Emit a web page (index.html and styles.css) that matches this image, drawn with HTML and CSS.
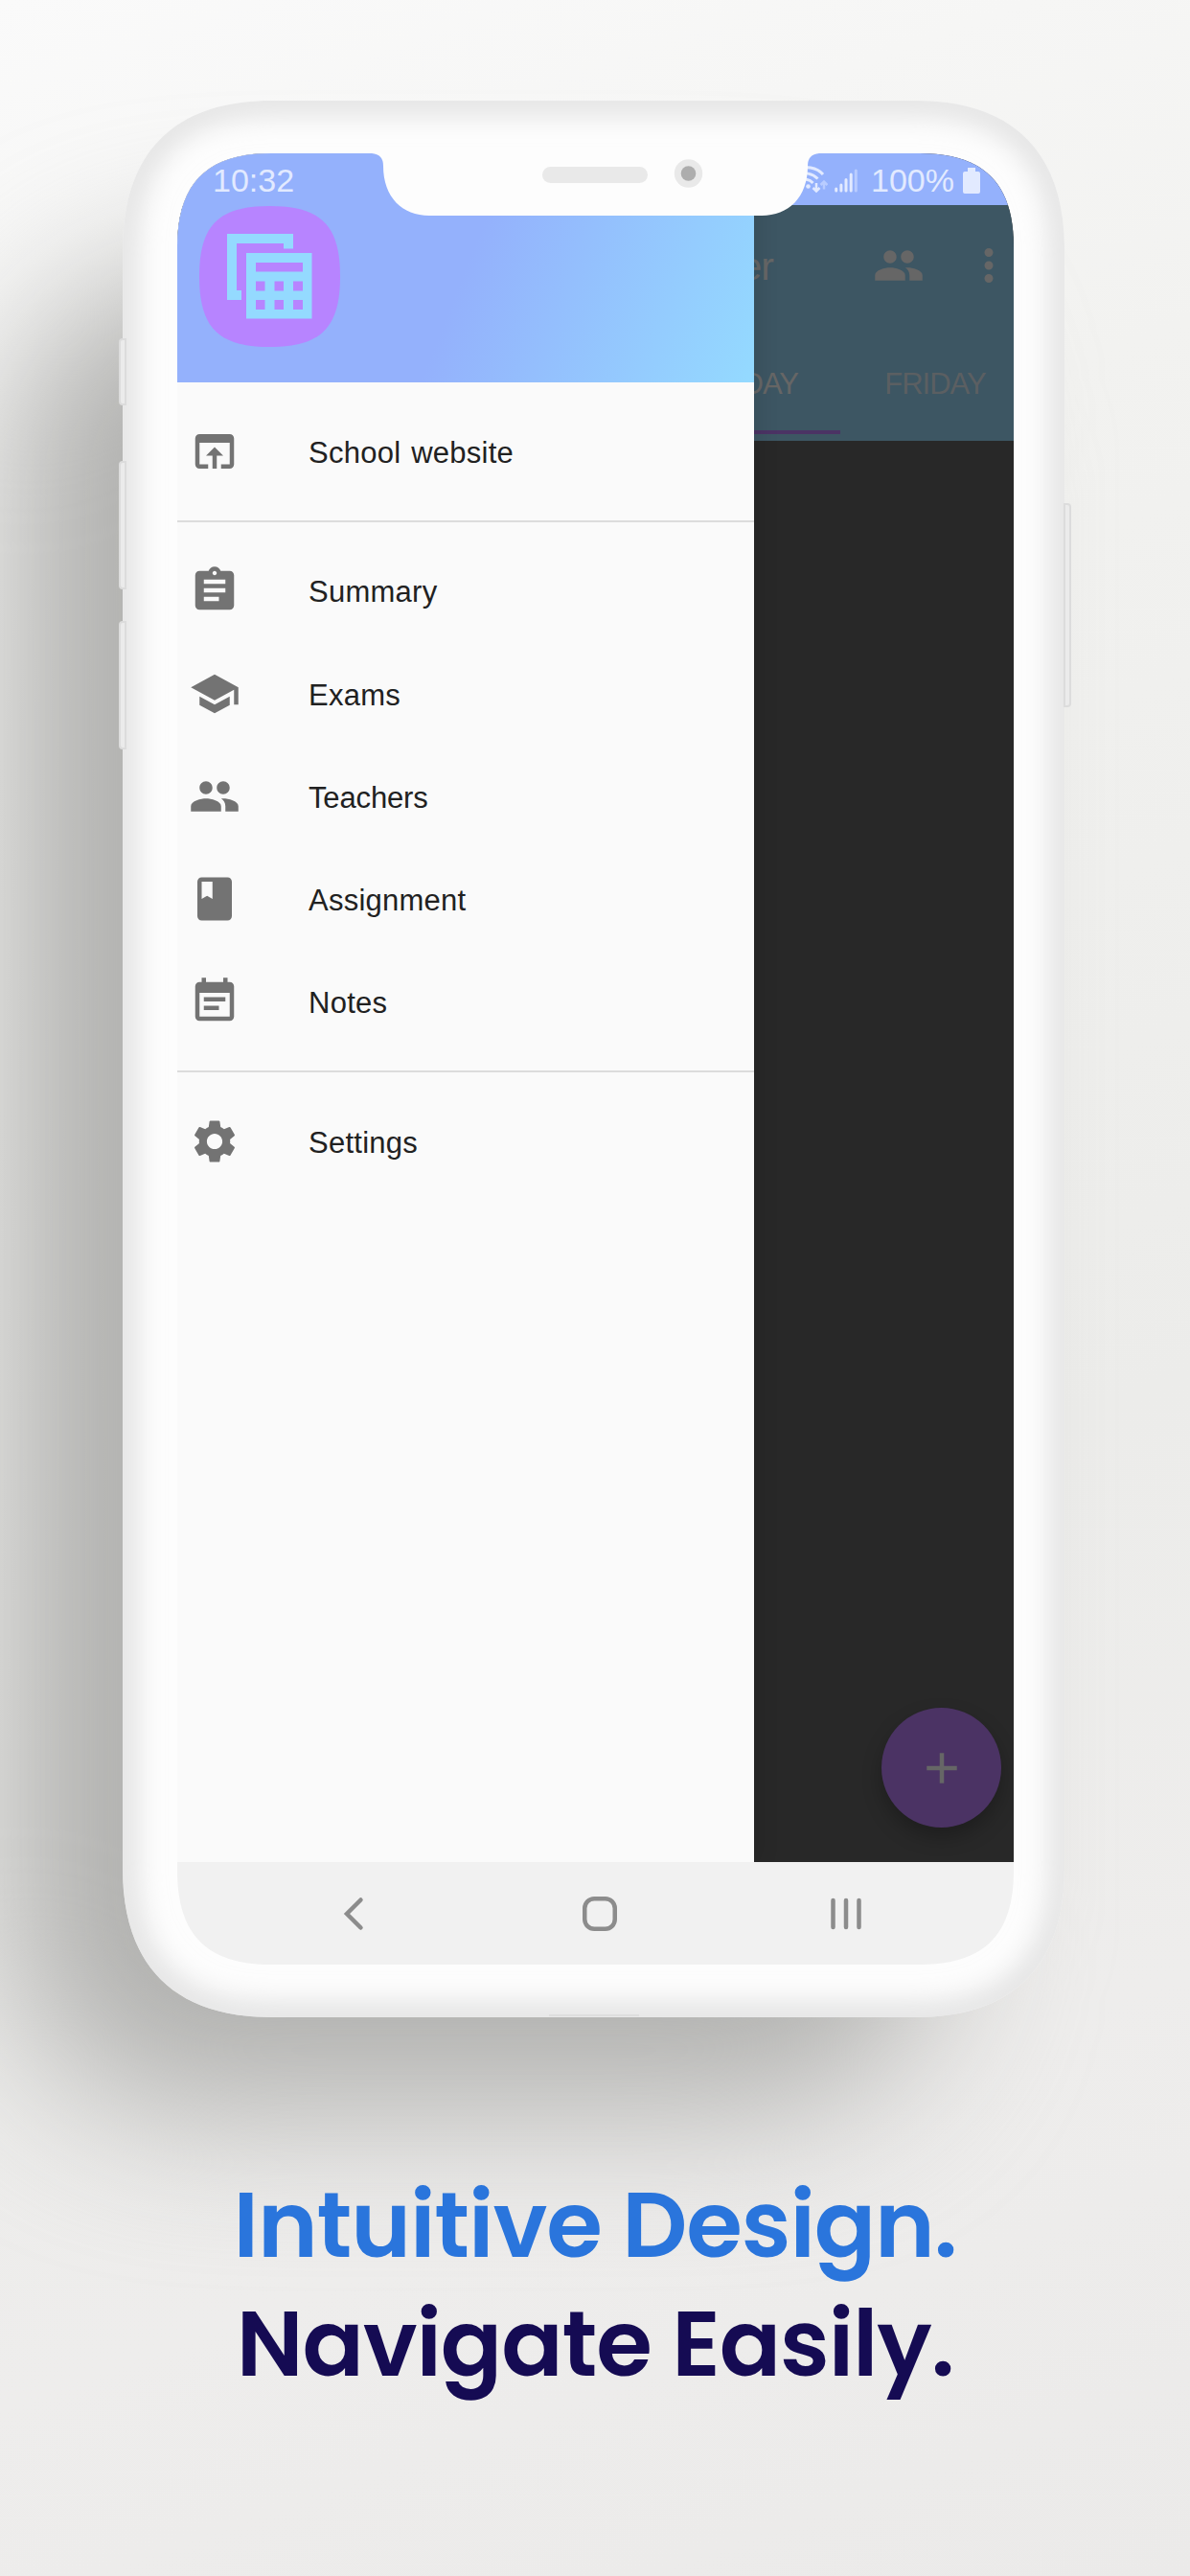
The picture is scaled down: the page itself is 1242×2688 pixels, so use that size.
FILE: index.html
```html
<!DOCTYPE html>
<html lang="en">
<head>
<meta charset="utf-8">
<title>Intuitive Design. Navigate Easily.</title>
<link rel="stylesheet" href="styles.css">
</head>
<body>
<main class="page">
  <div class="device">
    <span class="shadow"></span>
    <svg class="shell" viewBox="0 0 983 2000">
      <defs>
        <path id="body" d="M155 0H828C929 0 983 54 983 155V1845C983 1946 929 2000 828 2000H155C54 2000 0 1946 0 1845V155C0 54 54 0 155 0Z"/>
        <clipPath id="bodyClip"><use href="#body"/></clipPath>
        <filter id="soft" x="-10%" y="-10%" width="120%" height="120%"><feGaussianBlur stdDeviation="15"/></filter>
      </defs>
      <use href="#body" fill="#fdfdfd"/>
      <g clip-path="url(#bodyClip)"><use href="#body" fill="none" stroke="#dadada" stroke-width="24" filter="url(#soft)"/></g>
      <path d="M445 1998H539" stroke="#dedede" stroke-width="2"/>
    </svg>
    <span class="key key-mute"></span>
    <span class="key key-up"></span>
    <span class="key key-down"></span>
    <span class="key key-power"></span>
    <div class="screen">
      <div class="view">
        <div class="app">
          <header class="appbar">
            <div class="toolbar">
              <span class="app-title">er</span>
              <svg class="people" viewBox="0 0 24 24"><path d="M16 11c1.66 0 2.99-1.34 2.99-3S17.66 5 16 5s-3 1.34-3 3 1.34 3 3 3zm-8 0c1.66 0 2.99-1.34 2.99-3S9.66 5 8 5 5 6.34 5 8s1.34 3 3 3zm0 2c-2.33 0-7 1.17-7 3.5V19h14v-2.5c0-2.33-4.67-3.5-7-3.5zm8 0c-.29 0-.62.02-.97.05 1.16.84 1.97 1.97 1.97 3.45V19h6v-2.5c0-2.33-4.67-3.5-7-3.5z"/></svg>
              <svg class="more" viewBox="0 0 24 24"><path d="M12 8a2 2 0 1 0 0-4 2 2 0 0 0 0 4zm0 2a2 2 0 1 0 0 4 2 2 0 0 0 0-4zm0 6a2 2 0 1 0 0 4 2 2 0 0 0 0-4z"/></svg>
            </div>
            <nav class="tabs"><span class="tab tab-active">THURSDAY</span><span class="tab">FRIDAY</span></nav>
          </header>
          <button class="fab" aria-label="Add"><svg viewBox="0 0 24 24"><path d="M19 13h-6v6h-2v-6H5v-2h6V5h2v6h6z"/></svg></button>
        </div>
        <aside class="drawer">
          <div class="drawer-head">
            <svg class="logo" viewBox="0 0 147 147">
              <path fill="#b784ff" d="M73.500 0C127 0 147 20 147 73.500S127 147 73.500 147 0 127 0 73.500 20 0 73.500 0Z"/>
              <path fill="#94daff" d="M29 29H98V44.500H88V39H39V88H44V98H29Z"/>
              <path fill="#94daff" fill-rule="evenodd" d="M49 49H117.500V117.500H49ZM59 59V68.500H108V59ZM59 78.500V88.500H68.500V78.500ZM78.500 78.500V88.500H88V78.500ZM98 78.500V88.500H108V78.500ZM59 98V108H68.500V98ZM78.500 98V108H88V98ZM98 98V108H108V98Z"/>
            </svg>
          </div>
          <ul class="menu">
            <li><svg viewBox="0 0 24 24"><path d="M19 4H5c-1.110 0-2 .9-2 2v12c0 1.100.89 2 2 2h4v-2H5V8h14v10h-4v2h4c1.100 0 2-.9 2-2V6c0-1.100-.89-2-2-2zm-7 6l-4 4h3v6h2v-6h3l-4-4z"/></svg><span>School website</span></li>
          </ul>
          <ul class="menu">
            <li><svg viewBox="0 0 24 24"><path d="M19 3h-4.180C14.400 1.840 13.300 1 12 1c-1.300 0-2.400.84-2.820 2H5c-1.100 0-2 .9-2 2v14c0 1.100.9 2 2 2h14c1.100 0 2-.9 2-2V5c0-1.100-.9-2-2-2zm-7 0c.55 0 1 .45 1 1s-.45 1-1 1-1-.45-1-1 .45-1 1-1zm2 14H7v-2h7v2zm3-4H7v-2h10v2zm0-4H7V7h10v2z"/></svg><span>Summary</span></li>
            <li><svg viewBox="0 0 24 24"><path d="M5 13.180v4L12 21l7-3.820v-4L12 17l-7-3.820zM12 3L1 9l11 6 9-4.910V17h2V9L12 3z"/></svg><span>Exams</span></li>
            <li><svg viewBox="0 0 24 24"><path d="M16 11c1.660 0 2.990-1.340 2.990-3S17.660 5 16 5s-3 1.340-3 3 1.340 3 3 3zm-8 0c1.660 0 2.990-1.340 2.990-3S9.660 5 8 5 5 6.340 5 8s1.340 3 3 3zm0 2c-2.330 0-7 1.170-7 3.500V19h14v-2.500c0-2.330-4.670-3.500-7-3.500zm8 0c-.29 0-.62.02-.97.05 1.160.84 1.970 1.970 1.970 3.450V19h6v-2.500c0-2.330-4.670-3.500-7-3.500z"/></svg><span class="tight">Teachers</span></li>
            <li><svg viewBox="0 0 24 24"><path d="M18 2H6c-1.100 0-2 .9-2 2v16c0 1.100.9 2 2 2h12c1.100 0 2-.9 2-2V4c0-1.100-.9-2-2-2zM6 4h5v8l-2.500-1.500L6 12V4z"/></svg><span>Assignment</span></li>
            <li><svg viewBox="0 0 24 24"><path d="M17 10H7v2h10v-2zm2-7h-1V1h-2v2H8V1H6v2H5c-1.110 0-2 .9-2 2v14c0 1.100.89 2 2 2h14c1.100 0 2-.9 2-2V5c0-1.100-.9-2-2-2zm0 16H5V8h14v11zm-5-5H7v2h7v-2z"/></svg><span>Notes</span></li>
          </ul>
          <ul class="menu">
            <li><svg viewBox="0 0 24 24"><path d="M19.140 12.940c.04-.3.060-.61.060-.94 0-.32-.02-.64-.07-.94l2.030-1.580c.18-.14.23-.41.120-.61l-1.920-3.320c-.12-.22-.37-.29-.59-.22l-2.390.96c-.5-.38-1.030-.7-1.620-.94l-.36-2.540c-.04-.24-.24-.41-.48-.41h-3.840c-.24 0-.43.17-.47.41l-.36 2.540c-.59.24-1.130.57-1.620.94l-2.390-.96c-.22-.08-.47 0-.59.22L2.740 8.870c-.12.21-.08.47.12.61l2.030 1.580c-.05.3-.09.63-.09.94s.02.64.07.94l-2.030 1.580c-.18.14-.23.41-.12.61l1.920 3.320c.12.22.37.29.59.22l2.390-.96c.5.38 1.030.7 1.620.94l.36 2.540c.05.24.24.41.48.41h3.840c.24 0 .44-.17.47-.41l.36-2.540c.59-.24 1.130-.56 1.620-.94l2.390.96c.22.08.47 0 .59-.22l1.920-3.320c.12-.22.070-.47-.12-.61l-2.010-1.580zM12 15.600c-1.980 0-3.600-1.620-3.600-3.600s1.620-3.600 3.600-3.600 3.600 1.620 3.600 3.600-1.620 3.600-3.600 3.600z"/></svg><span>Settings</span></li>
          </ul>
        </aside>
        <div class="status">
          <span class="clock">10:32</span>
          <span class="status-icons">
            <svg class="wifi" viewBox="0 0 36 30">
              <g fill="none" stroke="#e2eaff" stroke-width="3"><path d="M2 4.500C12-1 25 2 31 9"/><path d="M4 9.500C11 6 20 8 25.500 13.500"/><path d="M6 15.500C11 13 17 14 20.500 18"/></g>
              <circle cx="15.500" cy="21.500" r="2.300" fill="#e2eaff"/>
              <path d="M24 18V26M20.500 23L24 26.500L27.500 23" fill="none" stroke="#e2eaff" stroke-width="2.500"/>
              <path d="M32 24.500V17M28.500 20L32 16.500L35.500 20" fill="none" stroke="#b9ccff" stroke-width="2.500"/>
            </svg>
            <svg class="signal" viewBox="0 0 24 26" stroke-width="3" stroke-linecap="round" stroke="#e2eaff"><path d="M1.700 22V24M6.900 18V24M12 12.500V24M17.200 7V24"/><path d="M22.300 3V24" stroke="#b9ccff"/></svg>
            <span class="percent">100%</span>
            <svg class="battery" viewBox="0 0 18 27"><path fill="#e2eaff" d="M5 0H13V4H16Q18 4 18 6V25Q18 27 16 27H2Q0 27 0 25V6Q0 4 2 4H5Z"/></svg>
          </span>
        </div>
      </div>
      <nav class="navbar">
        <svg viewBox="0 0 40 40"><path d="M27.500 5.500L13 20L27.500 34.500"/></svg>
        <svg viewBox="0 0 40 40"><rect x="4.250" y="4.250" width="31.500" height="31.500" rx="10"/></svg>
        <svg viewBox="0 0 40 40"><path d="M6.500 6V34M20 6V34M33.500 6V34"/></svg>
      </nav>
    </div>
    <svg class="notch" viewBox="0 0 467 65"><path fill="#fdfdfd" d="M0 0Q12 1 12 13C12 46 32 65 60 65H407C435 65 455 46 455 13Q455 1 467 0Z"/><rect x="178" y="14" width="110" height="17" rx="8.500" fill="#e9e9e9"/><circle cx="330.500" cy="21" r="14.700" fill="#e9e9e9"/><circle cx="330.500" cy="21" r="7.800" fill="#adadad"/></svg>
  </div>
  <h1 class="tagline"><span class="line-one">Intuitive Design.</span><span class="line-two">Navigate Easily.</span></h1>
</main>
</body>
</html>
```
FILE: styles.css
```css
* { box-sizing: border-box; }
body { margin: 0; font-family: "Liberation Sans", Arial, sans-serif; }
.page {
  width: 1242px; height: 2688px; overflow: hidden; padding-top: 105px;
  background: linear-gradient(160deg, #fafafa 0%, #f2f2f0 25%, #ececea 60%, #eeedec 80%, #ebeae9 100%);
  display: flex; flex-direction: column; align-items: center; isolation: isolate;
}
.device { position: relative; width: 983px; height: 2000px; margin-right: 3px; padding: 55px 53px 55px 57px; flex: none; }
.shadow { position: absolute; z-index: -1; left: -116px; top: 180px; width: 965px; height: 1915px; border-radius: 190px; background: #b0b0ae; filter: blur(80px); }
.shell { position: absolute; left: 0; top: 0; width: 983px; height: 2000px; }
.key { position: absolute; width: 8px; background: #ebebeb; border: 2px solid #dcdcdc; border-radius: 4px 0 0 4px; left: -4px; }
.key-mute { top: 248px; height: 70px; }
.key-up { top: 376px; height: 134px; }
.key-down { top: 543px; height: 134px; }
.key-power { left: 982px; top: 420px; height: 213px; border-radius: 0 4px 4px 0; }
.screen {
  position: relative; width: 873px; height: 1890px; display: flex; flex-direction: column;
  clip-path: path("M98 0H775C842 0 873 31 873 98V1792C873 1859 842 1890 775 1890H98C31 1890 0 1859 0 1792V98C0 31 31 0 98 0Z");
}
.view { position: relative; height: 1783px; flex: none; background: #282828; }
.app { height: 100%; padding-top: 54px; display: flex; flex-direction: column; justify-content: space-between; align-items: flex-end; }
.appbar { width: 100%; height: 246px; background: #3d5663; color: #666; }
.toolbar { height: 126px; display: flex; align-items: center; justify-content: flex-end; }
.app-title { font-size: 41px; margin-right: 104px; letter-spacing: -1px; padding-top: 2px; }
.people { width: 54px; height: 54px; fill: #666; }
.more { width: 54px; height: 54px; fill: #666; margin: 0 -1px 0 40px; }
.tabs { height: 120px; display: flex; justify-content: flex-end; font-size: 31px; letter-spacing: -1px; }
.tab { width: 181px; padding: 2px 0 0 17px; display: flex; align-items: center; justify-content: center; color: #5b5f62; }
.tab-active { width: 272px; height: 113px; padding: 13px 44px 0 0; justify-content: flex-end; color: #666; border-bottom: 4px solid #4b3364; }
.fab { width: 125px; height: 125px; border: 0; padding: 0; border-radius: 50%; background: #4b3364; margin: 0 13px 36px; box-shadow: 0 10px 20px rgba(0,0,0,.25); display: grid; place-items: center; }
.fab svg { width: 54px; height: 54px; fill: #666; }
.drawer { position: absolute; left: 0; top: 0; width: 602px; height: 1783px; background: #fafafa; box-shadow: 0 0 24px rgba(0,0,0,.15); clip-path: inset(0 -24px 0 0); }
.drawer-head { height: 239px; background: linear-gradient(111.650deg, #94b1fc 0%, #94b1fc 50%, #94daff 100%); padding: 55px 0 0 23px; }
.logo { width: 147px; height: 147px; display: block; }
.menu { list-style: none; margin: 0; padding: 18.250px 0; border-bottom: 2px solid #dcdcdc; }
.menu:last-child { border: 0; }
.menu li { height: 107.150px; display: flex; align-items: center; gap: 71px; padding-left: 12px; font-size: 31px; letter-spacing: .25px; word-spacing: 2px; color: #212121; }
.menu span { padding-top: 4px; }
.menu .tight { letter-spacing: -.15px; }
.menu svg { width: 54px; height: 54px; fill: #737373; flex: none; }
.status { position: absolute; left: 0; top: 0; width: 100%; height: 54px; padding: 2px 35px 0 37px; display: flex; align-items: center; justify-content: space-between; color: #e2eaff; font-size: 34px; isolation: isolate; }
.status::before { content: ""; position: absolute; z-index: -1; inset: 0 0 0 602px; background: #94b1fc; }
.status-icons { display: flex; align-items: center; }
.wifi { width: 36px; height: 30px; margin-right: 7px; }
.signal { width: 24px; height: 26px; margin-right: 14px; }
.percent { margin-right: 9px; }
.battery { width: 18px; height: 27px; }
.navbar { height: 107px; padding-left: 8px; background: #f1f1f1; display: flex; align-items: center; justify-content: center; gap: 217px; }
.navbar svg { width: 40px; height: 40px; fill: none; stroke: #8c8c8c; stroke-width: 4.500; stroke-linecap: round; }
.notch { position: absolute; left: 260px; top: 55px; width: 467px; height: 65px; }
.tagline { margin: 155px 0 0; font: 600 95px/124px Poppins, sans-serif; letter-spacing: -1.100px; display: flex; flex-direction: column; align-items: center; white-space: nowrap; }
.line-one { color: #2a75dc; }
.line-two { color: #150b53; }
```
